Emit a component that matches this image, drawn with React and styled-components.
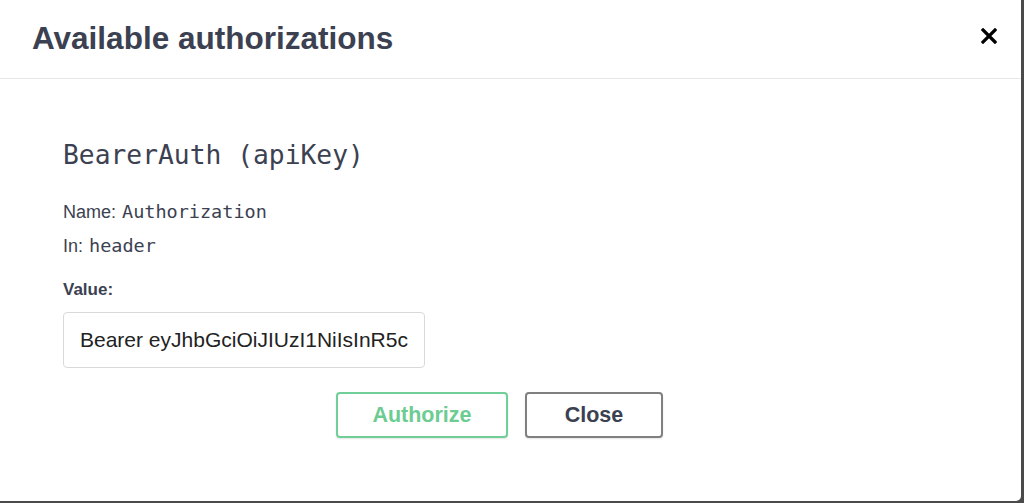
import React from "react";
import styled, { createGlobalStyle } from "styled-components";

const Global = createGlobalStyle`
  html, body { margin: 0; padding: 0; }
  body {
    background: #4a4a4a;
    font-family: "Liberation Sans", Arial, sans-serif;
    width: 1024px;
    height: 503px;
    overflow: hidden;
  }
`;

const Modal = styled.div`
  width: 1021px;
  height: 501px;
  background: #fff;
  border-bottom-right-radius: 5px;
  display: flex;
  flex-direction: column;
`;

const Header = styled.div`
  height: 79px;
  box-sizing: border-box;
  border-bottom: 1px solid #e8e8e8;
  display: flex;
  align-items: center;
  justify-content: space-between;
  padding: 0 24px 2px 32px;
`;

const Title = styled.h3`
  margin: 0;
  font-family: "Liberation Sans", Arial, sans-serif;
  font-size: 31.5px;
  font-weight: 700;
  color: #3b4151;
`;

const CloseIcon = styled.button`
  border: none;
  background: none;
  padding: 0;
  width: 16px;
  height: 16px;
  margin-bottom: 5px;
  display: flex;
  align-items: center;
  justify-content: center;
  cursor: pointer;
`;

const Body = styled.div`
  padding: 61px 63px 0 63px;
  display: flex;
  flex-direction: column;
`;

const SchemeTitle = styled.h4`
  margin: 0 0 31px 0;
  font-family: "DejaVu Sans Mono", "Liberation Mono", monospace;
  font-size: 26.3px;
  font-weight: 400;
  color: #3b4151;
`;

const InfoLine = styled.p`
  margin: 0 0 ${(p) => p.$mb || 0}px 0;
  font-size: 18px;
  color: #3b4151;
  line-height: 22px;
  display: flex;
  align-items: baseline;
`;

const Code = styled.code`
  font-family: "DejaVu Sans Mono", "Liberation Mono", monospace;
  font-size: 18.5px;
  margin-left: 6px;
  color: #3b4151;
`;

const Label = styled.label`
  font-size: 17px;
  font-weight: 700;
  color: #3b4151;
  line-height: 22px;
  margin-bottom: 11px;
`;

const Input = styled.input`
  width: 362px;
  height: 56px;
  box-sizing: border-box;
  border: 1px solid #d9d9d9;
  border-radius: 4px;
  padding: 0 16px;
  font-family: "Liberation Sans", Arial, sans-serif;
  font-size: 21px;
  color: #222;
  background: #fff;
  outline: none;
`;

const Actions = styled.div`
  display: flex;
  justify-content: center;
  gap: 17px;
  margin-top: 24px;
  padding-right: 22px;
`;

const Btn = styled.button`
  height: 46px;
  width: ${(p) => p.$w}px;
  box-sizing: border-box;
  border: 2px solid ${(p) => p.$border};
  color: ${(p) => p.$color};
  background: #fff;
  border-radius: 4px;
  font-family: "Liberation Sans", Arial, sans-serif;
  font-size: 21.5px;
  font-weight: 700;
  box-shadow: 0 1px 2px rgba(0, 0, 0, 0.1);
  cursor: pointer;
`;

export default function App() {
  return (
    <>
      <Global />
      <Modal>
        <Header>
          <Title>Available authorizations</Title>
          <CloseIcon aria-label="close">
            <svg width="16" height="16" viewBox="0 0 16 16">
              <path d="M2 2 L14 14 M14 2 L2 14" stroke="#000" strokeWidth="3.2" strokeLinecap="square" />
            </svg>
          </CloseIcon>
        </Header>
        <Body>
          <SchemeTitle>BearerAuth (apiKey)</SchemeTitle>
          <InfoLine $mb={12}>
            Name:<Code>Authorization</Code>
          </InfoLine>
          <InfoLine $mb={22}>
            In:<Code>header</Code>
          </InfoLine>
          <Label>Value:</Label>
          <Input readOnly value="Bearer eyJhbGciOiJIUzI1NiIsInR5cCI6IkpXVCJ9" />
          <Actions>
            <Btn $w={172} $border="#6fcf97" $color="#6ccc91">Authorize</Btn>
            <Btn $w={138} $border="#808080" $color="#3b4151">Close</Btn>
          </Actions>
        </Body>
      </Modal>
    </>
  );
}
